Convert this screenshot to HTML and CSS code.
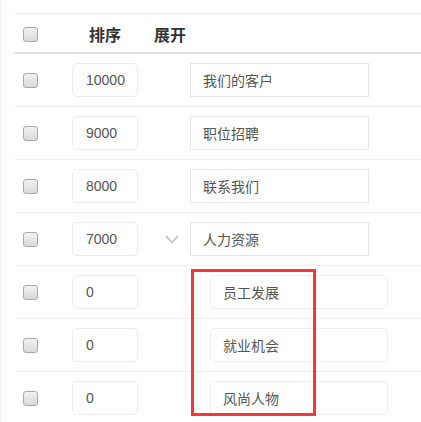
FILE: index.html
```html
<!DOCTYPE html>
<html lang="zh-CN">
<head>
  <meta charset="UTF-8">
  <title>栏目排序</title>
  <link rel="stylesheet" href="styles.css">
</head>
<body>
  <div class="page">
    <div class="nav-table">
      <div class="nav-row nav-head">
        <div class="col-check"><span class="check"></span></div>
        <div class="col-sort">排序</div>
        <div class="col-expand">展开</div>
        <div class="col-name"></div>
      </div>

      <div class="nav-row">
        <div class="col-check"><span class="check"></span></div>
        <div class="col-sort"><input class="sort-input" type="text" value="10000"></div>
        <div class="col-expand"></div>
        <div class="col-name"><input class="name-input" type="text" value="我们的客户"></div>
      </div>
      <div class="nav-row">
        <div class="col-check"><span class="check"></span></div>
        <div class="col-sort"><input class="sort-input" type="text" value="9000"></div>
        <div class="col-expand"></div>
        <div class="col-name"><input class="name-input" type="text" value="职位招聘"></div>
      </div>
      <div class="nav-row">
        <div class="col-check"><span class="check"></span></div>
        <div class="col-sort"><input class="sort-input" type="text" value="8000"></div>
        <div class="col-expand"></div>
        <div class="col-name"><input class="name-input" type="text" value="联系我们"></div>
      </div>
      <div class="nav-row">
        <div class="col-check"><span class="check"></span></div>
        <div class="col-sort"><input class="sort-input" type="text" value="7000"></div>
        <div class="col-expand">
          <svg class="chevron" width="14" height="9" viewBox="0 0 14 9"><polyline points="1,1 7,7.5 13,1" fill="none" stroke="#c9c9c9" stroke-width="2"/></svg>
        </div>
        <div class="col-name"><input class="name-input" type="text" value="人力资源"></div>
      </div>

      <div class="nav-row">
        <div class="col-check"><span class="check"></span></div>
        <div class="col-sort"><input class="sort-input" type="text" value="0"></div>
        <div class="col-expand"></div>
        <div class="col-name"><input class="name-input child" type="text" value="员工发展"></div>
      </div>
      <div class="nav-row">
        <div class="col-check"><span class="check"></span></div>
        <div class="col-sort"><input class="sort-input" type="text" value="0"></div>
        <div class="col-expand"></div>
        <div class="col-name"><input class="name-input child" type="text" value="就业机会"></div>
      </div>
      <div class="nav-row">
        <div class="col-check"><span class="check"></span></div>
        <div class="col-sort"><input class="sort-input" type="text" value="0"></div>
        <div class="col-expand"></div>
        <div class="col-name"><input class="name-input child" type="text" value="风尚人物"></div>
      </div>

      <div class="mark-box"></div>
    </div>
  </div>
</body>
</html>
```

FILE: styles.css
```css
body {
  margin: 0;
  background: #fff;
  font-family: "Liberation Sans", "Noto Sans CJK SC", sans-serif;
  color: #555;
  border-left: 2px solid #f3f3f3;
  overflow: hidden;
}

.page {
  padding: 13px 0 0 13px;
}

.nav-table {
  position: relative;
  border-top: 1px solid #ededed;
}

.nav-row {
  display: grid;
  grid-template-columns: 45px 90px 40px 1fr;
  align-items: center;
  height: 52px;
  border-bottom: 1px solid #ebeef2;
}

.nav-head {
  height: 36px;
  padding-top: 2px;
  border-bottom: 2px solid #dedede;
  font-size: 16px;
  font-weight: bold;
  color: #333;
}

.col-check {
  padding-left: 8px;
  display: flex;
  align-items: center;
}
.check {
  display: block;
  width: 15px;
  height: 15px;
  box-sizing: border-box;
  border: 1px solid #a9a9a9;
  border-radius: 3px;
  background: linear-gradient(#f2f2f2, #d9d9d9);
}

.col-sort {
  text-align: center;
}
.nav-head .col-expand {
  padding-left: 4px;
}
.col-expand {
  display: flex;
  align-items: center;
}
.chevron {
  margin-left: 15px;
  display: block;
}

input {
  font-family: inherit;
  font-size: 14px;
  color: #555;
  box-sizing: border-box;
  height: 34px;
  outline: none;
  background: #fff;
  margin: 0;
}
.sort-input {
  width: 66px;
  border: 1px solid #ececec;
  border-radius: 5px;
  padding: 0 0 0 13px;
  display: block;
  margin: 0 auto;
}
.name-input {
  display: block;
  width: 179px;
  border: 1px solid #e6e6e6;
  border-radius: 0;
  padding: 0 12px;
}
.name-input.child {
  width: 178px;
  margin-left: 20px;
  border-color: #eeeeee;
  border-radius: 4px;
}

.mark-box {
  position: absolute;
  left: 176px;
  top: 255px;
  width: 125px;
  height: 147px;
  box-sizing: border-box;
  border: 3px solid #f6363b;
}
```
